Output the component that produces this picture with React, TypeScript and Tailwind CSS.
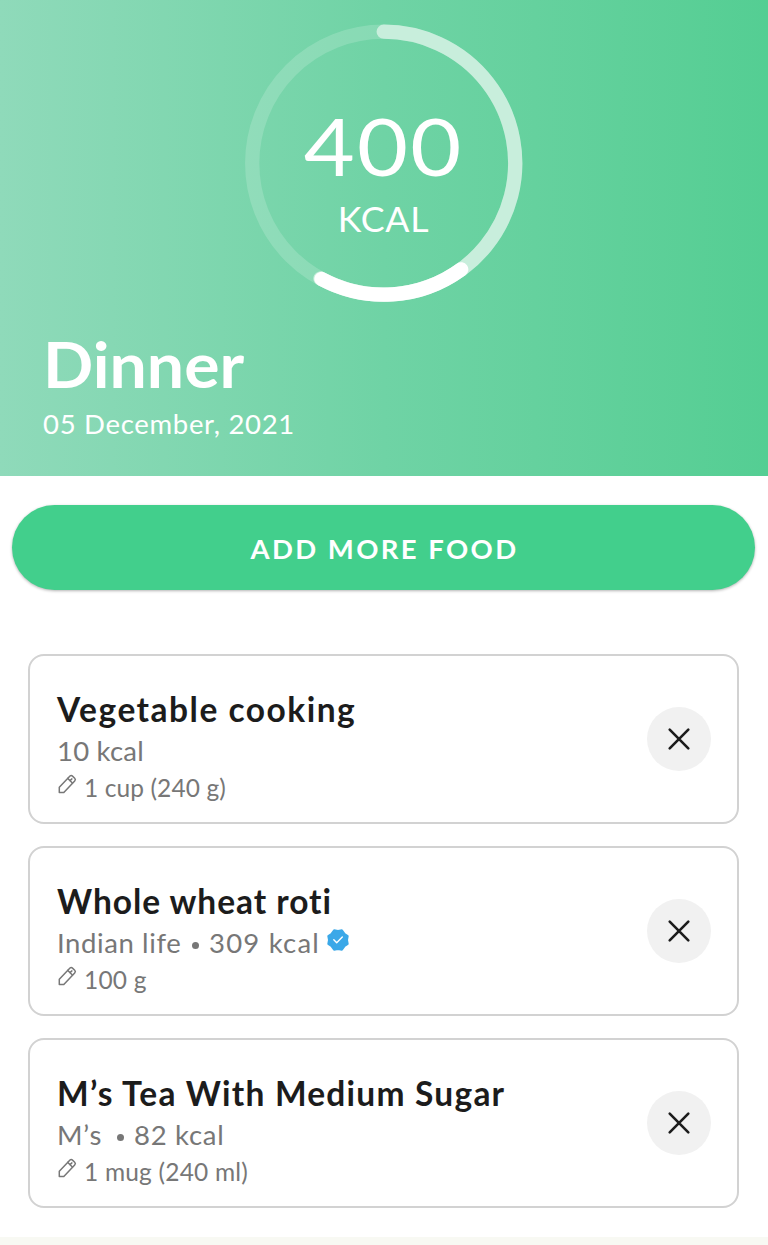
import React from "react";

type Food = {
  name: string;
  nameClass: string;
  brand?: string;
  brandClass?: string;
  kcal: string;
  kcalClass: string;
  verified?: boolean;
  serving: string;
  servingClass: string;
};

const foods: Food[] = [
  {
    name: "Vegetable cooking",
    nameClass: "tracking-[1.5px]",
    kcal: "10 kcal",
    kcalClass: "tracking-[0.2px]",
    serving: "1 cup (240 g)",
    servingClass: "tracking-[0.1px]",
  },
  {
    name: "Whole wheat roti",
    nameClass: "tracking-[0.95px]",
    brand: "Indian life",
    brandClass: "tracking-[0.6px] w-[135px]",
    kcal: "309 kcal",
    kcalClass: "tracking-[1.2px]",
    verified: true,
    serving: "100 g",
    servingClass: "tracking-[0.2px]",
  },
  {
    name: "M’s Tea With Medium Sugar",
    nameClass: "tracking-[1.22px]",
    brand: "M’s",
    brandClass: "tracking-[0.8px] w-[60px]",
    kcal: "82 kcal",
    kcalClass: "tracking-[0.7px]",
    serving: "1 mug (240 ml)",
    servingClass: "tracking-[0.2px]",
  },
];

function Pencil() {
  return (
    <svg className="mb-[7px] ml-px h-5 w-5 shrink-0" viewBox="0 0 20 20" fill="none" stroke="#777" strokeWidth="1.5" strokeLinejoin="round" strokeLinecap="round">
      <path d="M1.3 18.4V13.2L12 2.1Q13.2 .8 14.5 2.1L16.7 4.2Q18 5.5 16.7 6.9L5.8 18.4Z" />
      <path d="M9.8 4.4L14.4 9.1M13.9 4.9L11.9 6.8" />
    </svg>
  );
}

function Verified() {
  return (
    <svg className="ml-[6px] h-6 w-6 shrink-0 -translate-y-[3px]" viewBox="-12 -12 24 24">
      <path
        d="M0-9L3.9-9.7L6.3-6.3L9.7-3.9L9 0L9.7 3.9L6.3 6.3L3.9 9.7L0 9L-3.9 9.7L-6.3 6.3L-9.7 3.9L-9 0L-9.7-3.9L-6.3-6.3L-3.9-9.7Z"
        fill="#3ba8e8"
        stroke="#3ba8e8"
        strokeWidth="2"
        strokeLinejoin="round"
      />
      <path d="M-4.2-.2L-1.3 2.7L4.3-3" fill="none" stroke="#fff" strokeWidth="1.4" strokeLinecap="round" strokeLinejoin="round" />
    </svg>
  );
}

function FoodCard({ food }: { food: Food }) {
  return (
    <li className="flex h-[170px] items-center justify-between rounded-[16px] border-2 border-[#d2d2d2] bg-white pr-[26px] pl-[27px]">
      <div className="flex flex-col pt-[13px]">
        <h2 className={`h-[42px] whitespace-nowrap text-[33.5px] leading-[42px] font-bold text-[#1c1c1c] ${food.nameClass}`}>{food.name}</h2>
        <div className="flex h-[41px] items-center text-[27.5px] leading-[41px] whitespace-nowrap text-[#777]">
          {food.brand && (
            <>
              <span className={food.brandClass}>{food.brand}</span>
              <span className="mt-[5px] mr-[10px] h-[7px] w-[7px] rounded-full bg-[#777]" />
            </>
          )}
          <span className={food.kcalClass}>{food.kcal}</span>
          {food.verified && <Verified />}
        </div>
        <div className="flex h-[32px] items-center gap-[6px] text-[24.5px] leading-[32px] whitespace-nowrap text-[#777]">
          <Pencil />
          <span className={`pt-px ${food.servingClass}`}>{food.serving}</span>
        </div>
      </div>
      <button aria-label="Remove" className="flex h-16 w-16 items-center justify-center rounded-full bg-[#f1f1f1]">
        <svg className="h-6 w-6" viewBox="0 0 24 24" fill="none" stroke="#1c1c1c" strokeWidth="2.6" strokeLinecap="round">
          <path d="M2.7 2.7L21.3 21.3M21.3 2.7L2.7 21.3" />
        </svg>
      </button>
    </li>
  );
}

export default function App() {
  return (
    <main className="flex h-[1245px] w-[768px] flex-col overflow-hidden bg-white font-['Lato',sans-serif]">
      <header className="flex h-[476px] flex-col bg-linear-to-r from-[#8fdaba] via-[#6fd3a5] to-[#54ce93] text-white">
        <div className="mt-[24px] ml-[244px] grid h-[279px] w-[279px]">
          <svg className="col-start-1 row-start-1 h-[279px] w-[279px]" viewBox="244 24 279 279" fill="none" strokeWidth="14.3">
            <circle cx="383.7" cy="163.2" r="131.5" stroke="#fff" strokeOpacity=".17" />
            <path d="M383.7 31.7A131.5 131.5 0 1 1 320.5 278.5" stroke="#c8eedc" strokeLinecap="round" />
            <path d="M461.2 269.4A131.5 131.5 0 0 1 321.5 279" stroke="#fff" strokeLinecap="round" />
          </svg>
          <div className="col-start-1 row-start-1 flex flex-col items-center pt-[81px]">
            <div className="h-[80px] scale-x-110 text-[80px] leading-[80px] tracking-[2px] whitespace-nowrap">400</div>
            <div className="mt-[14px] h-[40px] scale-x-105 text-[34px] leading-[40px] tracking-[0.7px]">KCAL</div>
          </div>
        </div>
        <h1 className="mt-[23px] ml-[43px] h-[76px] w-[220px] origin-left scale-x-105 text-[63px] leading-[76px] font-bold">Dinner</h1>
        <p className="mt-[5px] ml-[43px] h-[34px] text-[27.5px] leading-[34px] tracking-[0.7px]">05 December, 2021</p>
      </header>
      <button className="mr-[13px] ml-[12px] mt-[29px] h-[85px] shrink-0 rounded-full bg-[#42cf8c] pt-[3px] pl-[2px] text-[27.5px] font-bold tracking-[2.4px] text-white shadow-[0_1px_3px_rgba(0,0,0,0.3)]">
        ADD MORE FOOD
      </button>
      <ul className="mt-[64px] mr-[29px] ml-[28px] flex flex-col gap-[22px]">
        {foods.map((food) => (
          <FoodCard key={food.name} food={food} />
        ))}
      </ul>
      <footer className="mt-auto h-[8px] shrink-0 bg-[#f8f9f3]" />
    </main>
  );
}
